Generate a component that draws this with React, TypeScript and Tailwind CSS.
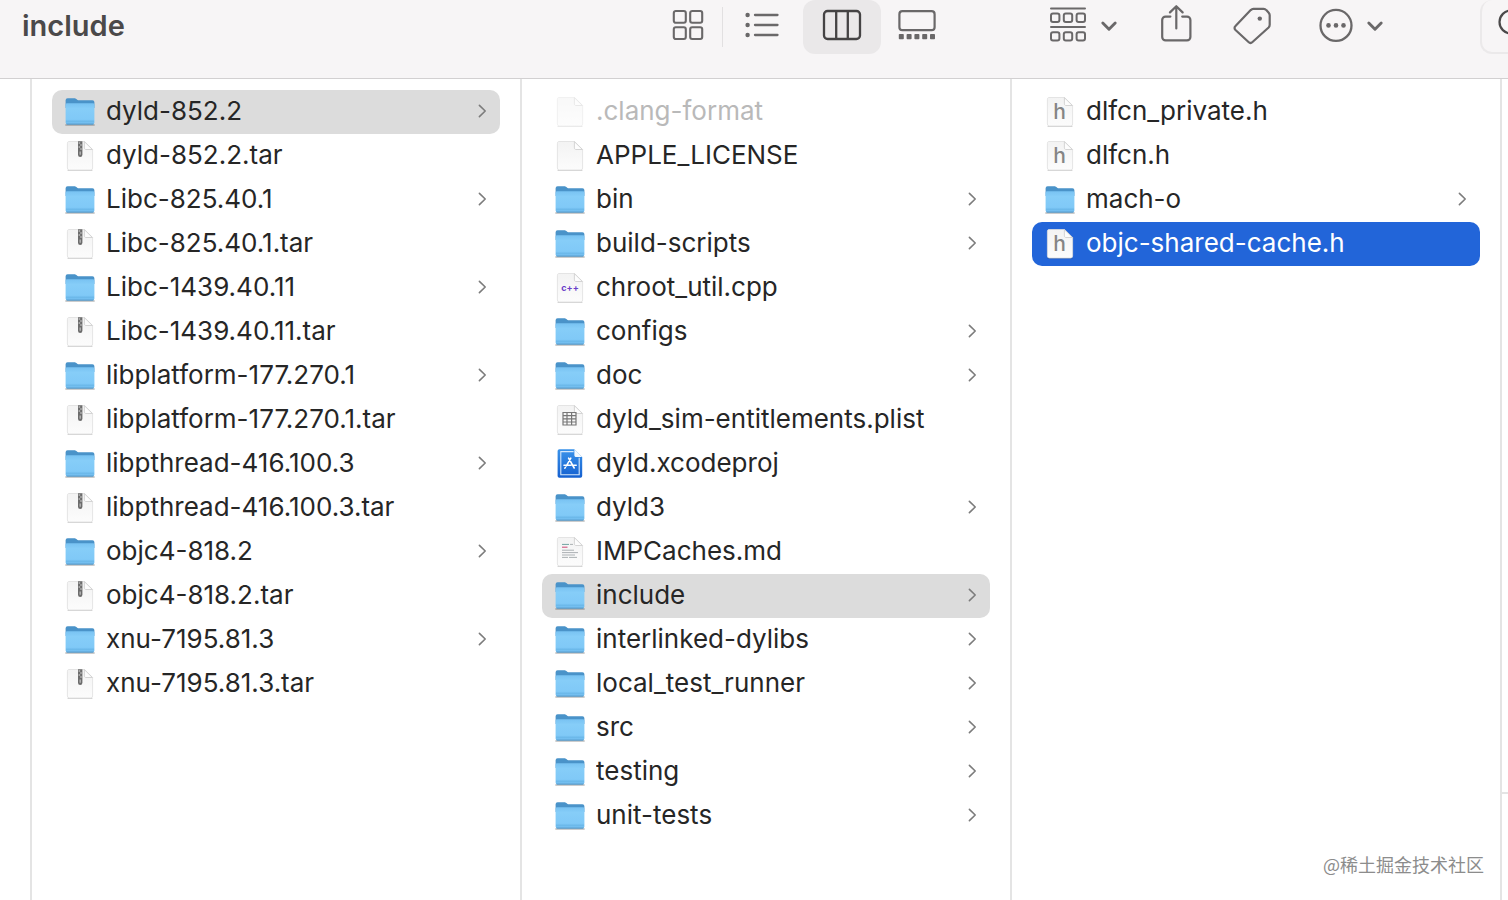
import type { ReactNode } from "react";

type Kind = "folder" | "zip" | "blank" | "cpp" | "plist" | "xcode" | "text" | "header";

type Entry = {
  name: string;
  kind: Kind;
  open?: boolean;
  active?: boolean;
  dimmed?: boolean;
};

const projects: Entry[] = [
  { name: "dyld-852.2", kind: "folder", open: true },
  { name: "dyld-852.2.tar", kind: "zip" },
  { name: "Libc-825.40.1", kind: "folder" },
  { name: "Libc-825.40.1.tar", kind: "zip" },
  { name: "Libc-1439.40.11", kind: "folder" },
  { name: "Libc-1439.40.11.tar", kind: "zip" },
  { name: "libplatform-177.270.1", kind: "folder" },
  { name: "libplatform-177.270.1.tar", kind: "zip" },
  { name: "libpthread-416.100.3", kind: "folder" },
  { name: "libpthread-416.100.3.tar", kind: "zip" },
  { name: "objc4-818.2", kind: "folder" },
  { name: "objc4-818.2.tar", kind: "zip" },
  { name: "xnu-7195.81.3", kind: "folder" },
  { name: "xnu-7195.81.3.tar", kind: "zip" },
];

const dyld: Entry[] = [
  { name: ".clang-format", kind: "blank", dimmed: true },
  { name: "APPLE_LICENSE", kind: "blank" },
  { name: "bin", kind: "folder" },
  { name: "build-scripts", kind: "folder" },
  { name: "chroot_util.cpp", kind: "cpp" },
  { name: "configs", kind: "folder" },
  { name: "doc", kind: "folder" },
  { name: "dyld_sim-entitlements.plist", kind: "plist" },
  { name: "dyld.xcodeproj", kind: "xcode" },
  { name: "dyld3", kind: "folder" },
  { name: "IMPCaches.md", kind: "text" },
  { name: "include", kind: "folder", open: true },
  { name: "interlinked-dylibs", kind: "folder" },
  { name: "local_test_runner", kind: "folder" },
  { name: "src", kind: "folder" },
  { name: "testing", kind: "folder" },
  { name: "unit-tests", kind: "folder" },
];

const include: Entry[] = [
  { name: "dlfcn_private.h", kind: "header" },
  { name: "dlfcn.h", kind: "header" },
  { name: "mach-o", kind: "folder" },
  { name: "objc-shared-cache.h", kind: "header", active: true },
];

function Gradients() {
  return (
    <svg width="0" height="0" className="absolute" aria-hidden="true">
      <defs>
        <linearGradient id="folderFront" x1="0" y1="0" x2="0" y2="1">
          <stop offset="0" stopColor="#78c2f2" />
          <stop offset="0.25" stopColor="#86cdf8" />
          <stop offset="0.75" stopColor="#80c9f7" />
          <stop offset="1" stopColor="#6cb9ec" />
        </linearGradient>
        <linearGradient id="paper" x1="0" y1="0" x2="0" y2="1">
          <stop offset="0" stopColor="#f3f3f3" />
          <stop offset="1" stopColor="#fcfcfc" />
        </linearGradient>
        <linearGradient id="xcode" x1="0" y1="0" x2="0" y2="1">
          <stop offset="0" stopColor="#3a93ea" />
          <stop offset="1" stopColor="#1560d0" />
        </linearGradient>
      </defs>
    </svg>
  );
}

function FolderIcon() {
  return (
    <>
      <path d="M2 29h28" stroke="#000" strokeOpacity="0.2" strokeWidth="1.8" strokeLinecap="round" />
      <path
        d="M1.6 4.2a2 2 0 0 1 2-2h6.600c1 0 1.500.3 2.200.9l.8.6c.6.4 1 .6 1.800.6h13.400a2 2 0 0 1 2 2V12H1.600z"
        fill="#4a93c9"
      />
      <path d="M1.600 8.800c0-1 .6-1.600 1.600-1.600h25.600c1 0 1.600.6 1.600 1.600v17.600a2 2 0 0 1-2 2H3.600a2 2 0 0 1-2-2z" fill="url(#folderFront)" />
      <path d="M2 25.200h28" stroke="#62b0e4" strokeWidth="0.7" />
      <path d="M3 28.200h26" stroke="#5592bd" strokeWidth="0.9" strokeLinecap="round" />
    </>
  );
}

function Paper({ children }: { children?: ReactNode }) {
  return (
    <>
      <path d="M4 30.4h24" stroke="#000" strokeOpacity="0.2" strokeWidth="1" strokeLinecap="round" />
      <path
        d="M5 1.5h15.6l8 8V28a2 2 0 0 1-2 2H5.4a2 2 0 0 1-2-2V3.1C3.4 2.2 4 1.500 5 1.500z"
        fill="url(#paper)"
        stroke="#dedede"
        strokeWidth="0.8"
      />
      <path d="M20.4 1.7v6.2c0 1 .6 1.6 1.6 1.6h6.4z" fill="#fdfdfd" stroke="#cccccc" strokeWidth="0.8" />
      {children}
    </>
  );
}

function EntryGlyph({ kind }: { kind: Kind }) {
  switch (kind) {
    case "folder":
      return <FolderIcon />;
    case "zip":
      return (
        <Paper>
          <path d="M14 1.2h4.4v13.6a2.2 2.2 0 0 1-4.4 0z" fill="#6c6c6c" />
          <path d="M14.6 3h1.6M16.2 5h1.6M14.6 7h1.6M16.2 9h1.6" stroke="#dcdcdc" strokeWidth="1" />
          <path d="M16.2 11.4v3.4" stroke="#b5b5b5" strokeWidth="1.4" />
        </Paper>
      );
    case "cpp":
      return (
        <Paper>
          <text
            x="16"
            y="19"
            textAnchor="middle"
            fontFamily="Inter, sans-serif"
            fontSize="9"
            fontWeight="700"
            fill="#6a3fc9"
          >
            c++
          </text>
        </Paper>
      );
    case "plist":
      return (
        <Paper>
          <path
            d="M9 8.500h13v12.500H9zM9 11.600h13M9 14.800h13M9 18h13M13 8.500v12.500M17.600 8.500v12.500"
            fill="none"
            stroke="#777777"
            strokeWidth="1.2"
          />
        </Paper>
      );
    case "xcode":
      return (
        <>
          <path
            d="M5.4 1.2h15l7.800 7.800V28a1.8 1.8 0 0 1-1.8 1.8H5.4A1.8 1.8 0 0 1 3.6 28V3a1.8 1.8 0 0 1 1.8-1.8z"
            fill="url(#xcode)"
          />
          <path d="M19.6 3.6H6.800v23.200h18.400V9.8" fill="none" stroke="#d5e8fc" strokeWidth="1.1" />
          <path d="M20.400 1.200v6c0 1.100.7 1.800 1.800 1.800h6z" fill="#f4f9fe" />
          <path
            d="M16.800 10.200l-4.400 7.600M14.600 10.200l5.600 9.800M10 17.200h7M19.600 17.200h2.600M11.400 19.400l-.5.8"
            fill="none"
            stroke="#ffffff"
            strokeWidth="1.6"
            strokeLinecap="round"
          />
        </>
      );
    case "text":
      return (
        <Paper>
          <path d="M8 8.400h7" stroke="#6fa3a0" strokeWidth="1" />
          <path d="M16 8.400h3M8 14.200h12M8 16.600h16M8 19h13M8 21.400h6M15 21.400h8" stroke="#a3a8ab" strokeWidth="0.9" />
          <path d="M8 11.200h5.500" stroke="#d0557f" strokeWidth="1.1" />
        </Paper>
      );
    case "header":
      return (
        <Paper>
          <text
            x="15.6"
            y="23"
            textAnchor="middle"
            fontFamily="Inter, sans-serif"
            fontSize="21"
            fontWeight="500"
            fill="#858585"
          >
            h
          </text>
        </Paper>
      );
    default:
      return <Paper />;
  }
}

function Row({ entry }: { entry: Entry }) {
  const tone = entry.active
    ? "bg-[#2265d9] text-white"
    : entry.open
      ? "bg-[#dcdcdc] text-[#262626]"
      : entry.dimmed
        ? "text-[#b9b9b9]"
        : "text-[#262626]";
  return (
    <li>
      <button
        type="button"
        className={`flex h-11 w-full items-center rounded-[10px] px-3 text-left text-[26px] leading-8 ${tone}`}
      >
        <svg
          viewBox="0 0 32 32"
          className={`size-8 shrink-0 ${entry.dimmed ? "opacity-50" : ""}`}
          aria-hidden="true"
        >
          <EntryGlyph kind={entry.kind} />
        </svg>
        <span className="ml-2.5 flex-1 truncate pb-0.5">{entry.name}</span>
        {entry.kind === "folder" && (
          <svg viewBox="0 0 12 16" className="mb-0.5 h-4 w-3 shrink-0" fill="none" aria-hidden="true">
            <path d="M3.4 2.4L9.2 8l-5.800 5.600" stroke="#7c7c7c" strokeWidth="1.6" strokeLinecap="round" strokeLinejoin="round" />
          </svg>
        )}
      </button>
    </li>
  );
}

function Column({ label, entries }: { label: string; entries: Entry[] }) {
  return (
    <ul aria-label={label} className="min-w-0 flex-1 border-l-2 border-[#e4e4e4] px-5 pt-[11px]">
      {entries.map((entry) => (
        <Row key={entry.name} entry={entry} />
      ))}
    </ul>
  );
}

function Chevron() {
  return (
    <svg viewBox="0 0 18 14" className="h-3.5 w-[18px]" fill="none" aria-hidden="true">
      <path d="M2.8 5l6.200 6.200L15.200 5" stroke="#6a6869" strokeWidth="2.900" strokeLinecap="round" strokeLinejoin="round" />
    </svg>
  );
}

function Toolbar() {
  return (
    <header className="flex h-[79px] items-start overflow-hidden border-b border-[#d2d0d1] bg-[#f7f5f6] pl-[22px]">
      <h1 className="flex-1 pt-1.5 text-[29px] leading-10 font-semibold text-[#4b494a]">include</h1>

      <div className="flex h-[54px] shrink-0 items-center" role="group" aria-label="View">
        <button type="button" aria-label="Icons" className="flex h-full w-[68px] items-center justify-center pb-1">
          <svg viewBox="0 0 32 32" className="size-8" fill="none" stroke="#6a6869" strokeWidth="2.1">
            <rect x="1.8" y="2" width="12" height="11.8" rx="2" />
            <rect x="18.2" y="2" width="12" height="11.8" rx="2" />
            <rect x="1.8" y="18.2" width="12" height="11.8" rx="2" />
            <rect x="18.2" y="18.2" width="12" height="11.8" rx="2" />
          </svg>
        </button>
        <span className="h-10 w-px bg-[#e2e0e1]" />
        <button type="button" aria-label="List" className="flex h-full w-20 items-center justify-center pr-0.5 pb-1">
          <svg viewBox="0 0 34 28" className="h-7 w-[34px]" fill="#6a6869">
            <circle cx="2.6" cy="4" r="2.2" />
            <circle cx="2.6" cy="14" r="2.2" />
            <circle cx="2.6" cy="24" r="2.2" />
            <path d="M10 4h22.5M10 14h22.5M10 24h22.5" stroke="#6a6869" strokeWidth="2.3" strokeLinecap="round" />
          </svg>
        </button>
        <button
          type="button"
          aria-label="Columns"
          aria-pressed="true"
          className="flex h-full w-[78px] items-center justify-center rounded-xl bg-[#eae8e9] pb-1"
        >
          <svg viewBox="0 0 40 32" className="h-8 w-10" fill="none" stroke="#454344" strokeWidth="2.3">
            <rect x="2" y="2" width="36" height="28" rx="3.6" />
            <path d="M14.2 2v28M25.8 2v28" />
          </svg>
        </button>
        <button type="button" aria-label="Gallery" className="flex h-full w-[72px] items-center justify-center pb-1">
          <svg viewBox="0 0 40 32" className="h-8 w-10" fill="none" stroke="#6a6869">
            <rect x="2.4" y="2.2" width="35.2" height="19" rx="3" strokeWidth="2.2" />
            <g fill="#6a6869" stroke="none">
              <rect x="1.8" y="25" width="5" height="5.2" rx="0.8" />
              <rect x="9.600" y="25" width="5" height="5.2" rx="0.8" />
              <rect x="17.400" y="25" width="5" height="5.2" rx="0.8" />
              <rect x="25.200" y="25" width="5" height="5.2" rx="0.8" />
              <rect x="33" y="25" width="5" height="5.2" rx="0.8" />
            </g>
          </svg>
        </button>
      </div>

      <div className="ml-[95px] flex h-[54px] shrink-0 items-center pb-1">
        <button type="button" aria-label="Group items" className="flex items-center gap-3">
          <svg viewBox="0 0 40 36" className="h-9 w-10" fill="none" stroke="#6a6869" strokeWidth="2">
            <path d="M3 1.600h34M3 20h34" strokeLinecap="round" />
            <rect x="3" y="6.600" width="8.4" height="8.4" rx="2" />
            <rect x="15.8" y="6.600" width="8.4" height="8.4" rx="2" />
            <rect x="28.6" y="6.600" width="8.4" height="8.4" rx="2" />
            <rect x="3" y="25.200" width="8.4" height="8.4" rx="2" />
            <rect x="15.8" y="25.200" width="8.4" height="8.4" rx="2" />
            <rect x="28.6" y="25.200" width="8.4" height="8.4" rx="2" />
          </svg>
          <Chevron />
        </button>
        <button type="button" aria-label="Share" className="ml-[42px]">
          <svg viewBox="0 0 32 40" className="h-10 w-8" fill="none" stroke="#6a6869" strokeWidth="2.2" strokeLinecap="round" strokeLinejoin="round">
            <path d="M10.400 11.600H5.600a3.400 3.400 0 0 0-3.400 3.400v17a3.400 3.400 0 0 0 3.400 3.400h21.400a3.400 3.400 0 0 0 3.400-3.400V15a3.400 3.400 0 0 0-3.400-3.400h-4.800" />
            <path d="M16.300 23.400V1.400M10 7.400l6.300-6.200 6.300 6.200" />
          </svg>
        </button>
        <button type="button" aria-label="Tags" className="ml-10">
          <svg viewBox="0 0 40 40" className="size-10" fill="none" stroke="#6a6869" strokeWidth="2.2" strokeLinejoin="round">
            <path d="M21.400 3.900h10.200c1.200 0 2 .4 2.700 1.200l2.400 2.600c.7.8 1 1.500 1 2.600v9.500c0 1.100-.3 1.900-1.100 2.700L20.500 37c-1.300 1.300-2.700 1.300-4 0L3.500 25c-1.300-1.300-1.300-2.700 0-4L18.700 5.100c.8-.8 1.600-1.200 2.700-1.200z" />
            <circle cx="27.800" cy="13.600" r="2.200" fill="#6a6869" stroke="none" />
          </svg>
        </button>
        <button type="button" aria-label="More actions" className="ml-[46px] flex items-center gap-3">
          <svg viewBox="0 0 36 36" className="size-9" fill="none">
            <circle cx="18" cy="18.400" r="15.500" stroke="#6a6869" strokeWidth="2.300" />
            <g fill="#6a6869">
              <circle cx="10.500" cy="18.400" r="2.300" />
              <circle cx="18" cy="18.400" r="2.300" />
              <circle cx="25.500" cy="18.400" r="2.300" />
            </g>
          </svg>
          <Chevron />
        </button>
      </div>

      <button
        type="button"
        aria-label="Search"
        className="ml-24 flex h-[54px] w-7 shrink-0 items-center overflow-hidden rounded-l-xl border-2 border-t-0 border-r-0 border-[#ebe9ea] pb-1 pl-4"
      >
        <svg viewBox="0 0 32 32" className="size-8 shrink-0" fill="none" stroke="#4b494a" strokeWidth="2.200" strokeLinecap="round">
          <circle cx="13" cy="14" r="11.500" />
          <path d="M21.500 22.500l8 8" />
        </svg>
      </button>
    </header>
  );
}

export default function App() {
  return (
    <div className="relative flex min-h-screen flex-col overflow-hidden bg-white font-['Inter','Noto_Sans_CJK_SC',sans-serif]">
      <Gradients />
      <Toolbar />
      <main className="flex flex-1 pl-[30px]">
        <Column label="Projects" entries={projects} />
        <Column label="dyld-852.2" entries={dyld} />
        <Column label="include" entries={include} />
        <aside className="flex w-2 shrink-0 flex-col border-l-2 border-[#e4e4e4]">
          <div className="flex-1" />
          <div className="h-[108px] border-t-2 border-[#e4e4e4]" />
        </aside>
      </main>
      <p className="absolute right-6 bottom-6 font-['Noto_Sans_CJK_SC',sans-serif] text-[18px] leading-6 text-[#8c8c8c]">
        @稀土掘金技术社区
      </p>
    </div>
  );
}
